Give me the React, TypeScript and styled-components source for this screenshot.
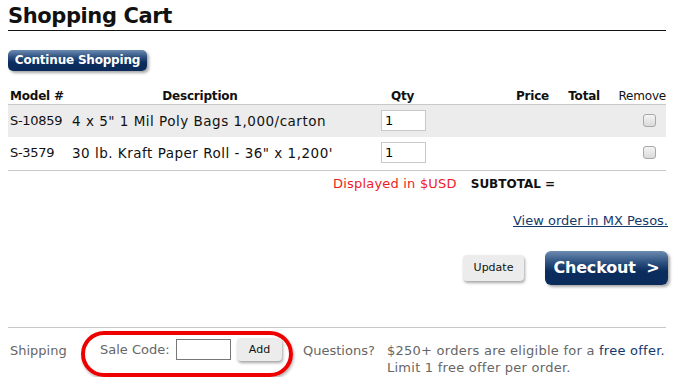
import React from 'react';
import styled, { createGlobalStyle } from 'styled-components';

const GlobalStyle = createGlobalStyle`
  body {
    margin: 0;
    background: #ffffff;
    font-family: 'DejaVu Sans', 'Liberation Sans', sans-serif;
    color: #111;
  }
`

const Page = styled.div`
  width: 658px;
  padding: 0 0 0 8px;
  display: flex;
  flex-direction: column;
`

const Title = styled.h1`
  margin: 0;
  padding-top: 2px;
  font-size: 21px;
  line-height: 28px;
  font-weight: bold;
  letter-spacing: -0.4px;
  border-bottom: 1px solid #111;
`

const BlueButton = styled.button<{ $big?: boolean }>`
  font-family: inherit;
  color: #fff;
  font-weight: bold;
  border: none;
  border-radius: ${p => (p.$big ? '6px' : '5px')};
  background: linear-gradient(#6d8bb0 0%, #2b4f7f 35%, #0b2d5e 60%, #0a2b5a 100%);
  box-shadow: 2px 2px 3px rgba(0, 0, 0, 0.35);
  cursor: pointer;
  font-size: ${p => (p.$big ? '16px' : '12px')};
  height: ${p => (p.$big ? '34px' : '21px')};
  width: ${p => (p.$big ? '123px' : '139px')};
  padding: 0;
  letter-spacing: -0.2px;
`

const ContinueRow = styled.div`
  margin-top: 18px;
`

const Grid = styled.div`
  margin-top: 17px;
  display: flex;
  flex-direction: column;
`

const Row = styled.div<{ $shade?: boolean; $head?: boolean }>`
  display: grid;
  grid-template-columns: 62px 258px 147px 80px 48px 1fr;
  align-items: center;
  height: ${p => (p.$head ? '16px' : '32px')};
  background: ${p => (p.$shade ? '#ececec' : 'transparent')};
  border-bottom: ${p => (p.$head ? '1px solid #c8c8c8' : 'none')};
  font-size: 13.5px;
`

const Cell = styled.div<{ $align?: string; $bold?: boolean; $pad?: number }>`
  font-weight: ${p => (p.$bold ? 'bold' : 'normal')};
  padding: 0 ${p => p.$pad ?? 0}px 0 2px;
  white-space: nowrap;
  display: flex;
  justify-content: ${p =>
    p.$align === 'center' ? 'center' : p.$align === 'right' ? 'flex-end' : 'flex-start'};
`

const ModelCell = styled(Cell)`
  font-size: 13px;
  letter-spacing: -0.3px;
`

const DescCell = styled(Cell)`
  letter-spacing: 0.5px;
`

const HeadCell = styled(Cell)`
  font-size: 12px;
  letter-spacing: -0.2px;
`

const QtyInput = styled.input`
  width: 45px;
  height: 21px;
  box-sizing: border-box;
  border: 1px solid #c8c8c8;
  font-family: inherit;
  font-size: 13px;
  padding: 0 3px;
  margin-left: 2px;
`

const Check = styled.span`
  width: 11px;
  height: 11px;
  border: 1px solid #a8a8a8;
  border-radius: 3px;
  background: linear-gradient(#f4f4f4, #dadada);
  display: inline-block;
`

const Divider = styled.div`
  border-top: 1px solid #c8c8c8;
  margin-top: 1px;
`

const SubtotalRow = styled.div`
  display: flex;
  padding-left: 325px;
  margin-top: 5px;
  font-size: 13px;
  line-height: 16px;
  gap: 14px;
`

const Red = styled.span`
  color: #ee1c24;
  letter-spacing: 0.2px;
`

const Bold = styled.span`
  font-weight: bold;
  font-size: 12px;
`

const LinkRow = styled.div`
  display: flex;
  justify-content: flex-end;
  margin-top: 21px;
  margin-right: -2px;
`

const Link = styled.a`
  color: #15396b;
  font-size: 13px;
  text-decoration: underline;
`

const ButtonRow = styled.div`
  display: flex;
  justify-content: flex-end;
  align-items: center;
  gap: 21px;
  margin-top: 23px;
  margin-right: -2px;
`

const GrayButton = styled.button<{ $w: number; $h: number }>`
  font-family: inherit;
  font-size: 11px;
  color: #111;
  width: ${p => p.$w}px;
  height: ${p => p.$h}px;
  padding: 0;
  border: none;
  border-radius: 4px;
  background: #ececec;
  box-shadow: 1px 2px 3px rgba(0, 0, 0, 0.35);
  flex-shrink: 0;
`

const Footer = styled.div`
  margin-top: 42px;
  border-top: 1px solid #c8c8c8;
  display: flex;
  align-items: flex-start;
  padding-top: 3px;
  font-size: 13px;
  color: #666;
`

const FooterLabel = styled.div<{ $w: number }>`
  width: ${p => p.$w}px;
  box-sizing: border-box;
  flex-shrink: 0;
  padding-top: 11px;
  padding-left: 2px;
  line-height: 17px;
  white-space: nowrap;
`

const Highlight = styled.div`
  display: flex;
  align-items: center;
  flex-shrink: 0;
  white-space: nowrap;
  width: 212px;
  height: 46px;
  box-sizing: border-box;
  border: 4px solid #ee0000;
  border-radius: 24px;
  padding: 0 7px 8px 15px;
  margin-right: 8px;
  box-shadow: 1px 2px 3px rgba(0, 0, 0, 0.3);
`

const CodeInput = styled.input`
  width: 55px;
  height: 21px;
  box-sizing: border-box;
  border: 1px solid #777;
  margin: 0 6px 0 auto;
`

const Offer = styled.div`
  padding-top: 11px;
  line-height: 17px;
  letter-spacing: 0.25px;
  white-space: nowrap;
`

const Navy = styled.span`
  color: #15396b;
`

function App() {
  const items = [
    { model: 'S-10859', desc: '4 x 5" 1 Mil Poly Bags 1,000/carton' },
    { model: 'S-3579', desc: '30 lb. Kraft Paper Roll - 36" x 1,200\'' },
  ]

  return (
    <Page>
      <GlobalStyle />
      <Title>Shopping Cart</Title>

      <ContinueRow>
        <BlueButton>Continue Shopping</BlueButton>
      </ContinueRow>

      <Grid>
        <Row $head>
          <HeadCell $bold>Model #</HeadCell>
          <HeadCell $bold $align="center">Description</HeadCell>
          <HeadCell $bold $align="center">Qty</HeadCell>
          <HeadCell $bold $align="right" $pad={6}>Price</HeadCell>
          <HeadCell $bold $align="right" $pad={3}>Total</HeadCell>
          <HeadCell $align="right">Remove</HeadCell>
        </Row>
        {items.map((it, i) => (
          <Row key={it.model} $shade={i === 0}>
            <ModelCell>{it.model}</ModelCell>
            <DescCell>{it.desc}</DescCell>
            <Cell $align="center"><QtyInput defaultValue="1" /></Cell>
            <Cell />
            <Cell />
            <Cell $align="right" $pad={10}><Check /></Cell>
          </Row>
        ))}
      </Grid>
      <Divider />

      <SubtotalRow>
        <Red>Displayed in $USD</Red>
        <Bold>SUBTOTAL =</Bold>
      </SubtotalRow>

      <LinkRow>
        <Link href="#">View order in MX Pesos.</Link>
      </LinkRow>

      <ButtonRow>
        <GrayButton $w={61} $h={26}>Update</GrayButton>
        <BlueButton $big>Checkout&nbsp;&nbsp;&gt;</BlueButton>
      </ButtonRow>

      <Footer>
        <FooterLabel $w={73}>Shipping</FooterLabel>
        <Highlight>
          <span>Sale Code:</span>
          <CodeInput />
          <GrayButton $w={45} $h={23}>Add</GrayButton>
        </Highlight>
        <FooterLabel $w={86}>Questions?</FooterLabel>
        <Offer>
          $250+ orders are eligible for a <Navy>free offer.</Navy>
          <br />
          Limit 1 free offer per order.
        </Offer>
      </Footer>
    </Page>
  );
}

export default App;
